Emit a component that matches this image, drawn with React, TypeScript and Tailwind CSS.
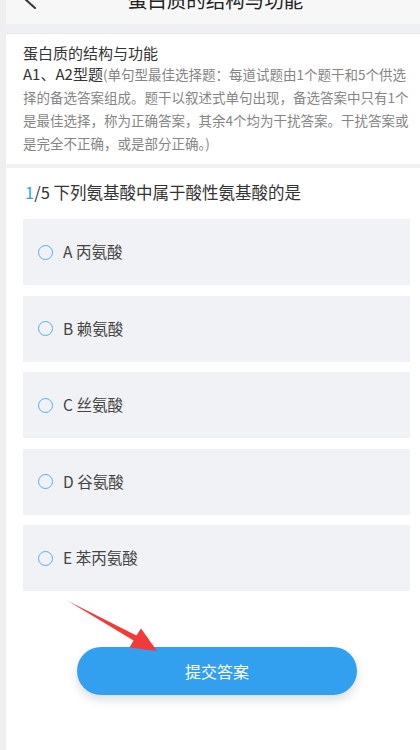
import React from "react";

const FONT = { fontFamily: '"Noto Sans CJK SC", "Noto Sans", sans-serif' };

const options = [
  { key: "A", label: "丙氨酸" },
  { key: "B", label: "赖氨酸" },
  { key: "C", label: "丝氨酸" },
  { key: "D", label: "谷氨酸" },
  { key: "E", label: "苯丙氨酸" },
];

function Option({ k, label }: { k: string; label: string }) {
  return (
    <div className="h-[66px] bg-[#f0f2f5] flex items-center pl-[15px]">
      <span className="w-[15px] h-[15px] rounded-full border-[1.6px] border-[#5aacf2]" />
      <span className="ml-[10px] text-[15.5px] text-[#444] leading-none">
        {k} {label}
      </span>
    </div>
  );
}

export default function App() {
  return (
    <div className="relative w-[420px] h-[750px] flex bg-white overflow-hidden" style={FONT}>
      {/* left strip */}
      <div className="w-[6px] bg-[#efefef] shrink-0" />

      <div className="flex-1 flex flex-col">
        {/* header, mostly scrolled off */}
        <div className="relative h-[24px] bg-[#f7f7f7] overflow-hidden flex justify-center pl-[5px]">
          <svg className="absolute left-[12px] top-[-12px]" width="24" height="24" viewBox="0 0 24 24">
            <path d="M18 2 L7 11 L17 20" fill="none" stroke="#333" strokeWidth="2" strokeLinecap="round" />
          </svg>
          <div className="-mt-[10px] text-[19.5px] leading-[20px] text-[#222]">蛋白质的结构与功能</div>
        </div>
        <div className="h-[10px] bg-[#eef0f3] border-b border-[#e8eaed]" />

        {/* chapter card */}
        <div className="pt-[10px] pb-[9px] pl-[17px] pr-[4px]">
          <div className="text-[15px] leading-[18px] text-[#333]">蛋白质的结构与功能</div>
          <p className="leading-[23px] text-[13.5px] text-[#858585]">
            <span className="text-[15px] text-[#333]">A1、A2型题</span>
            (单句型最佳选择题：每道试题由1个题干和5个供选择的备选答案组成。题干以叙述式单句出现，备选答案中只有1个是最佳选择，称为正确答案，其余4个均为干扰答案。干扰答案或是完全不正确，或是部分正确。)
          </p>
        </div>
        <div className="h-[4px] bg-[#f2f2f2]" />

        {/* question */}
        <div className="pt-[12px] pl-[19px] text-[16.5px] leading-[24px] text-[#333]">
          <span className="text-[#3a9df0]">1</span>/5 下列氨基酸中属于酸性氨基酸的是
        </div>

        <div className="mt-[15px] ml-[17px] mr-[10px] flex flex-col gap-[10.5px]">
          {options.map((o) => (
            <Option key={o.key} k={o.key} label={o.label} />
          ))}
        </div>

        <div className="mt-[56px] ml-[71px]">
          <button className="w-[280px] h-[48px] rounded-full bg-[#33a0ef] text-white text-[16px] shadow-[0_5px_10px_rgba(60,70,90,0.18)]">
            提交答案
          </button>
        </div>
      </div>

      {/* red annotation arrow */}
      <svg className="absolute inset-0 pointer-events-none" width="420" height="750" viewBox="0 0 420 750">
        <polygon
          points="68,601 136.4,635.6 141,628.5 157,651 129.5,647.5 133.6,640.4"
          fill="#f23a3a"
        />
      </svg>
    </div>
  );
}
